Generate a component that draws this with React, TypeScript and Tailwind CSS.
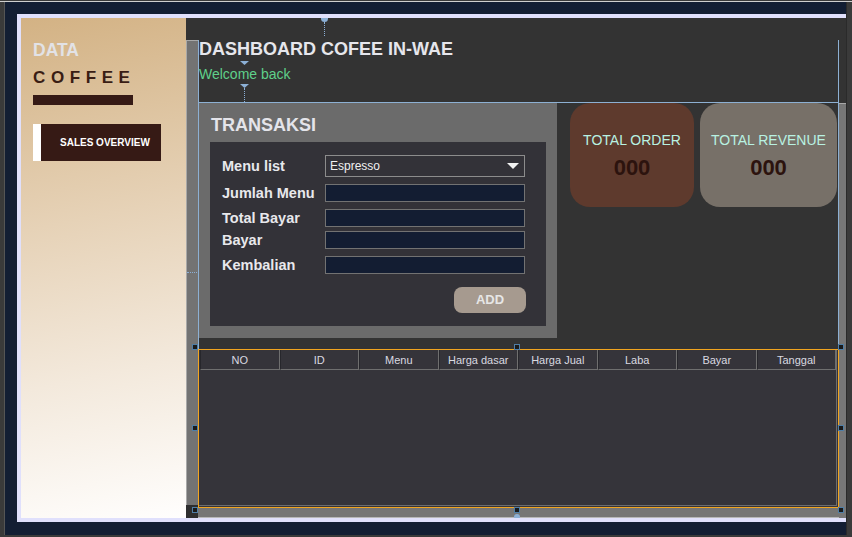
import React from "react";

const Handle = ({ x, y }: { x: number; y: number }) => (
  <div
    className="absolute w-[6px] h-[6px] border border-[#4f7ea6] bg-[#1a1a1a]"
    style={{ left: x, top: y }}
  />
);

const Tri = ({ x, y }: { x: number; y: number }) => (
  <svg className="absolute" style={{ left: x, top: y }} width="9" height="4" viewBox="0 0 9 4">
    <polygon points="0,0 9,0 4.5,4" fill="#8cb0d6" />
  </svg>
);

const columns = ["NO", "ID", "Menu", "Harga dasar", "Harga Jual", "Laba", "Bayar", "Tanggal"];

const FormRow = ({ label, mt, children, h }: { label: string; mt: string; children: React.ReactNode; h: string }) => (
  <div className={`flex items-center ${mt} ${h}`}>
    <div className="w-[103px] text-[14.5px] font-bold leading-[18px] text-[#e8e8ec] whitespace-nowrap">{label}</div>
    {children}
  </div>
);

const Input = () => <div className="w-[200px] h-[18px] border border-[#727272] bg-[#131d32]" />;

export default function App() {
  return (
    <div className="relative w-[852px] h-[537px] overflow-hidden bg-[#131e33] flex flex-col font-['Liberation_Sans',Arial,sans-serif]">
      <div className="h-px bg-[#3a3a3a]" />
      <div className="h-px bg-[#cfcfcf]" />
      <div className="flex h-[533px]">
        <div className="w-[5px] bg-[#3a3a3a] border-r border-[#555]" />
        <div className="flex-1 pt-[12px] pl-[12px]">
          <div className="w-[829px] h-[508px] border-l-4 border-t-4 border-b-4 border-[#e0e0fc] flex">
            {/* Sidebar */}
            <div className="w-[165px] h-full bg-[linear-gradient(168deg,#d3b284_0%,#e6d2b7_40%,#f3e9dc_70%,#fffefd_100%)] pl-[12px] pt-[22px]">
              <div className="text-[17.5px] font-bold leading-[20px] text-[#e2e2e6]">DATA</div>
              <div className="mt-[8px] text-[17px] font-bold leading-[20px] tracking-[5.6px] text-[#3a1d14]">COFFEE</div>
              <div className="mt-[7px] w-[100px] h-[10px] bg-[#361a15]" />
              <div className="mt-[19px] flex w-[128px] h-[37px]">
                <div className="w-[8px] bg-white" />
                <div className="flex-1 bg-[#361a15] flex items-center pl-[19px] text-[10px] font-bold text-white whitespace-nowrap">
                  SALES OVERVIEW
                </div>
              </div>
            </div>
            {/* Main */}
            <div className="w-[660px] h-full bg-[#333333] flex flex-col">
              <div className="h-[22px]" />
              <div className="flex h-[478px]">
                <div className="w-[12px] flex flex-col">
                  <div className="flex-1 bg-[#737373] border-t border-l border-[#a8a8a8]" />
                  <div className="h-[13px] bg-[#2e2e2e]" />
                </div>
                <div className="w-[641px] flex flex-col border-x border-[#8db0d3]">
                  <div className="h-[63px] border-b border-[#8db0d3]">
                    <div className="-mt-[1px] text-[18px] font-bold leading-[20px] text-[#e6e6ec] whitespace-nowrap">
                      DASHBOARD COFEE IN-WAE
                    </div>
                    <div className="mt-[7px] text-[14px] leading-[16px] text-[#5fd08a]">Welcome back</div>
                  </div>
                  <div className="flex h-[235px]">
                    <div className="w-[358px] h-[235px] bg-[#6b6b6b] pt-[12px] px-[11px]">
                      <div className="pl-[1px] text-[18px] font-bold leading-[20px] text-[#e4e4ea]">TRANSAKSI</div>
                      <div className="mt-[7px] w-[336px] h-[184px] bg-[#333238] pt-[13px] pl-[12px]">
                        <FormRow label="Menu list" mt="" h="h-[22px]">
                          <div className="relative w-[200px] h-[22px] border border-[#8c8c8c] bg-[#333238] flex items-center pl-[4px] text-[12px] text-[#f0f0f0]">
                            Espresso
                            <svg className="absolute right-[5px] top-[7px]" width="12" height="6" viewBox="0 0 12 6">
                              <polygon points="0,0 12,0 6,6" fill="#f2f2f2" />
                            </svg>
                          </div>
                        </FormRow>
                        <FormRow label="Jumlah Menu" mt="mt-[7px]" h="h-[18px]"><Input /></FormRow>
                        <FormRow label="Total Bayar" mt="mt-[7px]" h="h-[18px]"><Input /></FormRow>
                        <FormRow label="Bayar" mt="mt-[4px]" h="h-[18px]"><Input /></FormRow>
                        <FormRow label="Kembalian" mt="mt-[7px]" h="h-[18px]"><Input /></FormRow>
                        <div className="mt-[13px] ml-[232px] w-[72px] h-[26px] rounded-[8px] bg-[#a69a8f] flex items-center justify-center text-[13px] font-bold text-[#e6e6e6]">
                          ADD
                        </div>
                      </div>
                    </div>
                    <div className="ml-[13px] flex gap-[6px] h-[104px]">
                      <div className="w-[124px] h-[104px] rounded-[20px] bg-[#5e3a2d] flex flex-col items-center pt-[29px]">
                        <div className="text-[14px] leading-[16px] text-[#b8f2e2] whitespace-nowrap">TOTAL ORDER</div>
                        <div className="mt-[8px] text-[22px] font-bold leading-[24px] text-[#2c130e]">000</div>
                      </div>
                      <div className="w-[137px] h-[104px] rounded-[20px] bg-[#777068] flex flex-col items-center pt-[29px]">
                        <div className="text-[14px] leading-[16px] text-[#b8f2e2] whitespace-nowrap">TOTAL REVENUE</div>
                        <div className="mt-[8px] text-[22px] font-bold leading-[24px] text-[#2c130e]">000</div>
                      </div>
                    </div>
                  </div>
                  <div className="h-[11px]" />
                  <div className="-mx-px h-[159px] border border-[#f2a51f] bg-[#35343a] flex">
                    <div className="flex-1 mr-px mb-px border-r border-b border-[#6e6e6e] flex flex-col pl-px">
                      <div className="flex h-[20px] bg-[#35343a]">
                        {columns.map((c) => (
                          <div
                            key={c}
                            className="flex-1 flex items-center justify-center pt-[2px] border-r border-b border-[#6f6f6f] border-l border-l-[#27272c] text-[11px] text-[#d9d9e0] whitespace-nowrap"
                          >
                            {c}
                          </div>
                        ))}
                      </div>
                      <div className="flex-1" />
                    </div>
                  </div>
                  <div className="-mx-px h-[10px] bg-[#767676] border-b border-[#b8b8b8]" />
                </div>
                <div className="w-[7px] flex flex-col">
                  <div className="h-[63px]" />
                  <div className="flex-1 bg-[#777777] border-t border-[#a8a8a8]" />
                </div>
              </div>
            </div>
          </div>
        </div>
        <div className="w-[6px] bg-[#3a3a3a] border-l border-[#2a2a2a]" />
      </div>
      <div className="h-[2px] bg-[#3a3a3a]" />

      {/* designer markers */}
      <div className="absolute left-[321px] top-[18px] w-[7px] h-[4px] rounded-b-full bg-[#8cb0d6]" />
      <div className="absolute left-[324px] top-[22px] h-[14px] border-l border-dotted border-[#8cb0d6]" />
      <Tri x={240} y={61} />
      <Tri x={240} y={84} />
      <div className="absolute left-[244px] top-[88px] h-[14px] border-l border-dotted border-[#8cb0d6]" />
      <div className="absolute left-[187px] top-[272px] w-[10px] border-t border-dotted border-[#8cb0d6]" />
      <div className="absolute left-[514px] top-[514px] w-[6px] h-[4px] rounded-t-full bg-[#8cb0d6]" />
      <Handle x={192} y={344} />
      <Handle x={514} y={344} />
      <Handle x={838} y={344} />
      <Handle x={192} y={425} />
      <Handle x={838} y={425} />
      <Handle x={192} y={507} />
      <Handle x={514} y={507} />
      <Handle x={838} y={507} />
    </div>
  );
}
